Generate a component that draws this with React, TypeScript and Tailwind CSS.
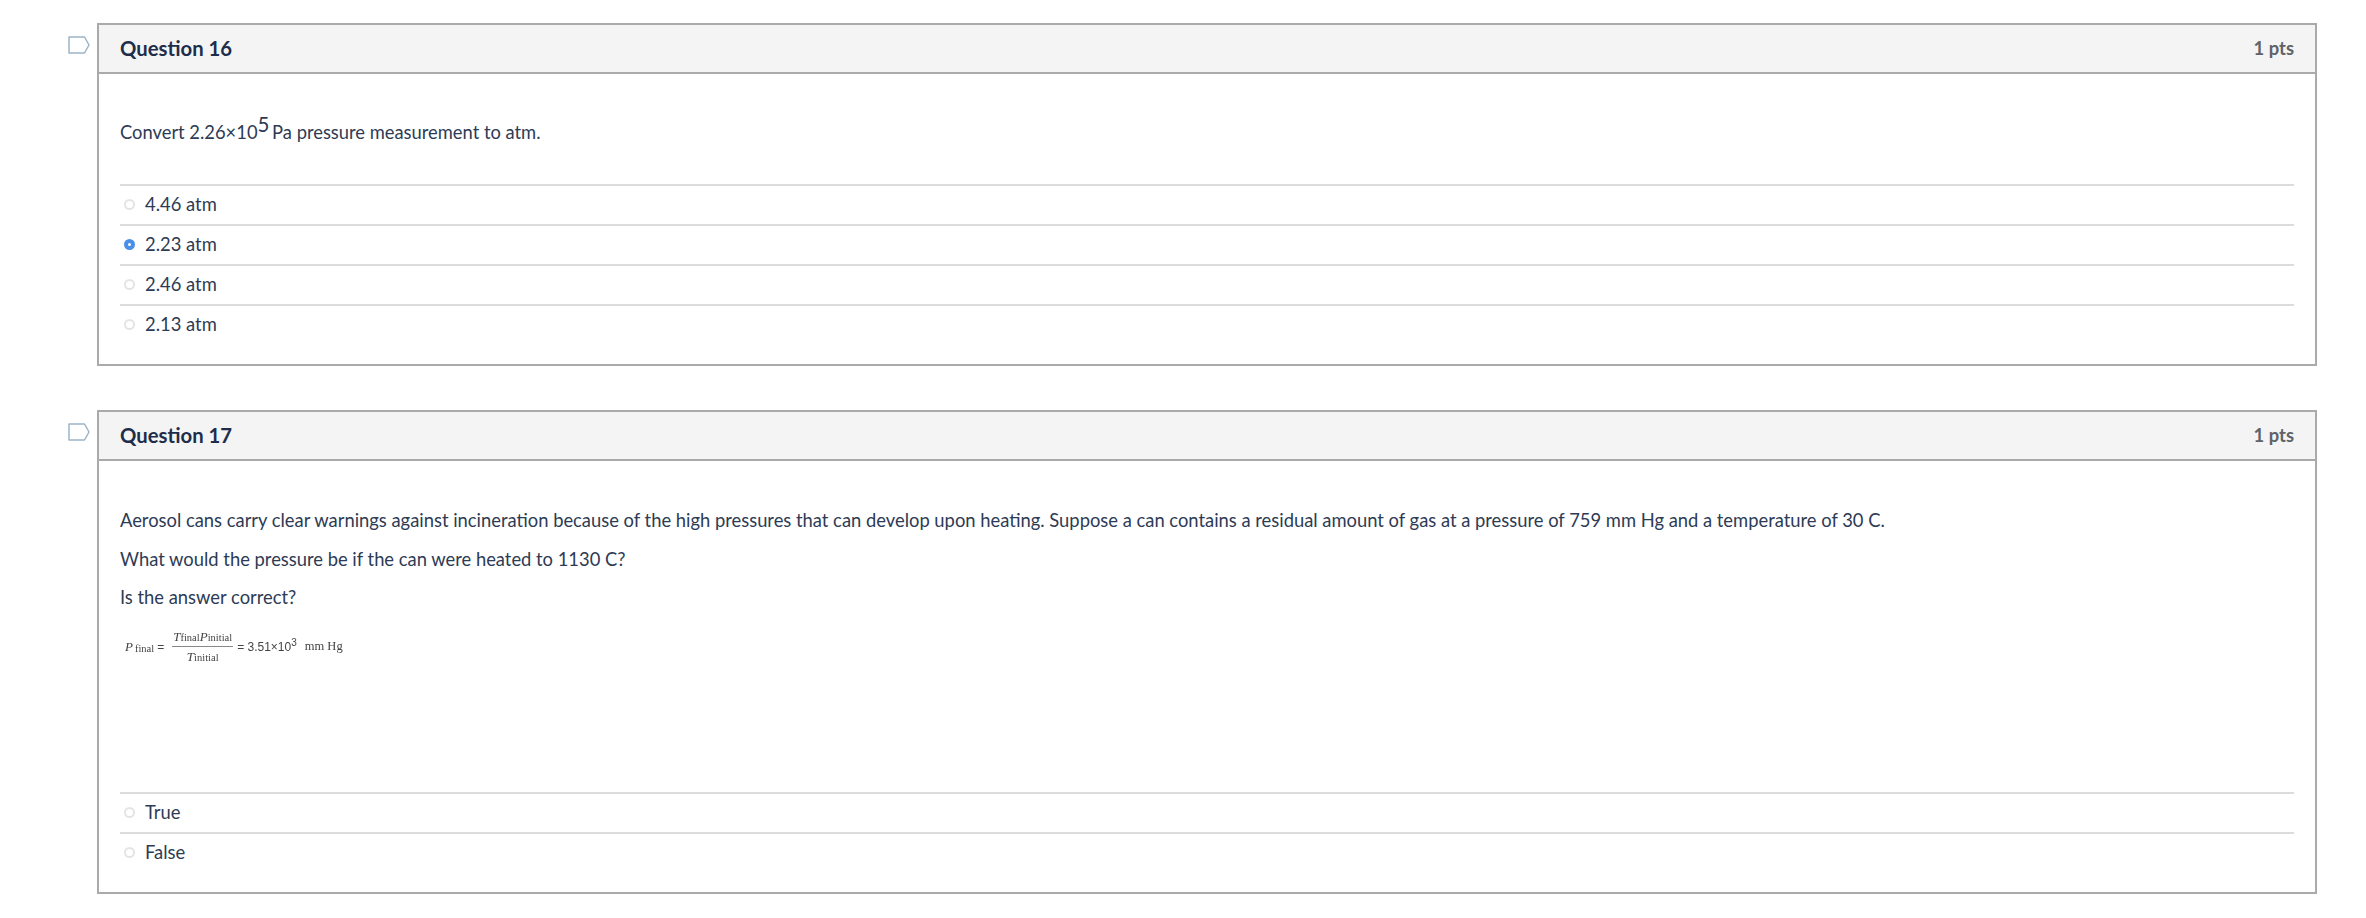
type Answer = {
  label: string;
  selected?: boolean;
};

function FlagIcon() {
  return (
    <svg width="22" height="18" viewBox="0 0 22 18" fill="none" className="mt-[13px] shrink-0">
      <path d="M1 1h15.5L21 9l-4.5 8H1z" stroke="#9db4c6" strokeWidth="1.5" strokeLinejoin="round" />
    </svg>
  );
}

function AnswerRow({ label, selected }: Answer) {
  return (
    <div className="flex h-10 items-center border-t-2 border-[#dcdcdc] pb-[1px] pl-[4px] text-[18.4px] text-[#2d3b55]">
      {selected ? (
        <span className="h-[11px] w-[11px] rounded-full border-[4px] border-[#4a90e8] bg-white" />
      ) : (
        <span className="h-[11px] w-[11px] rounded-full border-2 border-[#e4e4e4] bg-white" />
      )}
      <span className="ml-[10px]">{label}</span>
    </div>
  );
}

function Question({
  title,
  answers,
  bodyClass,
  children,
}: {
  title: string;
  answers: Answer[];
  bodyClass: string;
  children: React.ReactNode;
}) {
  return (
    <div className="flex">
      <div className="w-[29px] shrink-0">
        <FlagIcon />
      </div>
      <div className="flex-1 border-2 border-[#aaaaaa]">
        <div className="flex h-[49px] items-center justify-between border-b-2 border-[#aaaaaa] bg-[#f4f4f4] pl-[21px] pr-[21px]">
          <span className="text-[20.3px] font-bold text-[#1e2d4a]">{title}</span>
          <span className="text-[18.4px] font-bold text-[#5e6368]">1 pts</span>
        </div>
        <div className="pb-[20px] pl-[21px] pr-[21px]">
          <div className={bodyClass}>{children}</div>
          {answers.map((a) => (
            <AnswerRow key={a.label} {...a} />
          ))}
        </div>
      </div>
    </div>
  );
}

function Equation() {
  return (
    <div className="mt-[17px] flex items-center pl-[5px] text-[#444] [font-family:'Liberation_Serif',serif] blur-[0.3px]">
      <span className="text-[13px] italic">P</span>
      <span className="ml-[2px] mt-[4px] text-[10.5px]">final</span>
      <span className="ml-[3px] text-[12px] [font-family:'Liberation_Sans',sans-serif]">=</span>
      <div className="ml-[8px] flex flex-col items-center">
        <div className="border-b border-[#888] px-[1px] leading-[17px]">
          <span className="text-[13px] italic">T</span>
          <span className="text-[10.5px]">final</span>
          <span className="text-[13px] italic">P</span>
          <span className="text-[10.5px]">initial</span>
        </div>
        <div className="leading-[17px]">
          <span className="text-[13px] italic">T</span>
          <span className="text-[10.5px]">initial</span>
        </div>
      </div>
      <span className="ml-[4px] text-[12px] [font-family:'Liberation_Sans',sans-serif]">
        = 3.51×10<sup className="text-[10px]">3</sup>
      </span>
      <span className="ml-[8px] text-[12.5px]">mm Hg</span>
    </div>
  );
}

export default function App() {
  return (
    <div className="flex min-h-[918px] flex-col gap-[44px] bg-white pl-[68px] pr-[49px] pt-[23px] [font-family:Lato,sans-serif]">
      <Question
        title="Question 16"
        bodyClass="pt-[45px] pb-[39px] text-[18.35px] leading-[26px] text-[#2d3b55]"
        answers={[
          { label: "4.46 atm" },
          { label: "2.23 atm", selected: true },
          { label: "2.46 atm" },
          { label: "2.13 atm" },
        ]}
      >
        <p>
          Convert 2.26×10
          <span className="relative -top-[7px] mr-[-2px] text-[20.5px] leading-[0]">5</span> Pa pressure measurement to
          atm.
        </p>
      </Question>
      <Question
        title="Question 17"
        bodyClass="h-[331px] pt-[46px] text-[18.38px] text-[#2d3b55]"
        answers={[{ label: "True" }, { label: "False" }]}
      >
        <p className="leading-[26px]">
          Aerosol cans carry clear warnings against incineration because of the high pressures that can develop upon
          heating. Suppose a can contains a residual amount of gas at a pressure of 759 mm Hg and a temperature of 30 C.
        </p>
        <p className="mt-[13px] leading-[26px]">What would the pressure be if the can were heated to 1130 C?</p>
        <p className="mt-[12px] leading-[26px]">Is the answer correct?</p>
        <Equation />
      </Question>
    </div>
  );
}
